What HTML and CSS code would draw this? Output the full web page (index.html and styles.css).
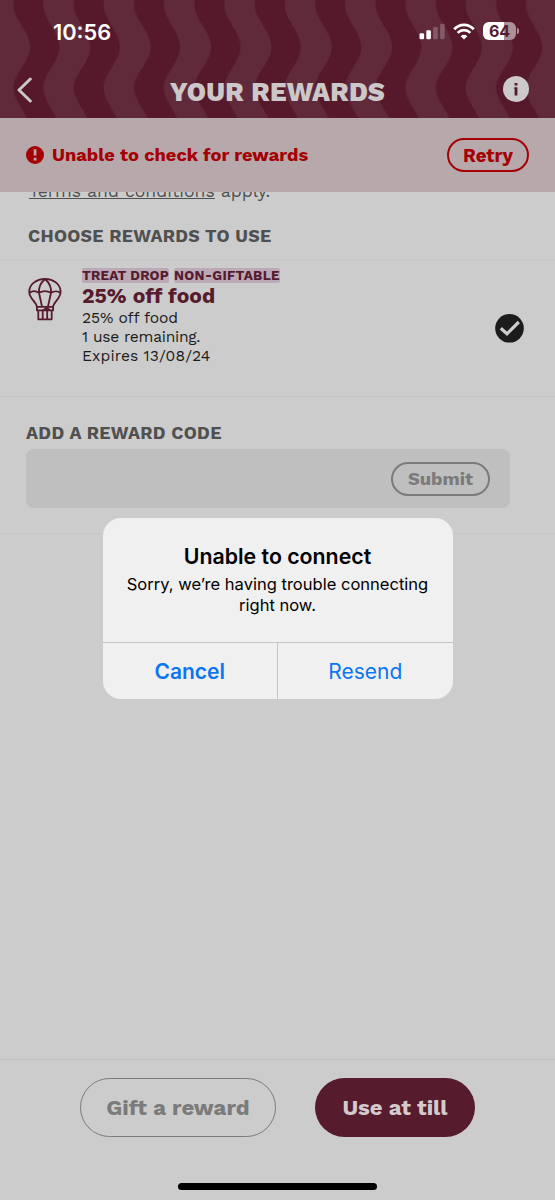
FILE: index.html
```html
<!DOCTYPE html>
<html lang="en">
<head>
<meta charset="utf-8">
<title>Your rewards</title>
<link rel="stylesheet" href="styles.css">
</head>
<body>
<div class="screen">
  <header class="header">
    <svg class="waves" width="555" height="118" viewBox="0 0 555 118" aria-hidden="true">
      <defs>
        <pattern id="wave" x="0" y="0" width="60.35" height="118" patternUnits="userSpaceOnUse">
          <path d="M30 -37C30 -22 13.300 -10 13.300 5C13.300 19 30 32 30 47C30 62 13.300 74 13.300 88C13.300 102 30 115 30 130H59.500C59.500 115 43.300 102 43.300 88C43.300 74 59.500 62 59.500 47C59.500 32 43.300 19 43.300 5C43.300 -10 59.500 -22 59.500 -37Z" fill="#56192b"/>
        </pattern>
      </defs>
      <rect width="555" height="118" fill="#602a3a"/>
      <rect width="555" height="118" fill="url(#wave)"/>
    </svg>
    <div class="status">
      <span class="time">10:56</span>
      <div class="indicators">
        <svg class="signal" width="26" height="17" viewBox="0 0 26 17">
          <rect x="0.500" y="10.200" width="4.600" height="6.100" rx="1.300" fill="#fff"/>
          <rect x="7.300" y="7.300" width="4.600" height="9" rx="1.300" fill="#fff"/>
          <rect x="14.200" y="3.900" width="4.600" height="12.400" rx="1.300" fill="#845a68"/>
          <rect x="21.100" y="0.800" width="4.600" height="15.500" rx="1.300" fill="#845a68"/>
        </svg>
        <svg class="wifi" width="22" height="17" viewBox="0 0 22 17" fill="none" stroke="#fff" stroke-width="2.700">
          <path d="M1.200 6.200C6.800 .3 15.200 .3 20.800 6.200"/>
          <path d="M4.700 9.900C8.300 6.300 13.700 6.300 17.300 9.900"/>
          <path d="M11 16.600L7.700 13.200C9.600 11.400 12.400 11.400 14.300 13.200Z" fill="#fff" stroke="none"/>
        </svg>
        <span class="battery"><b>64</b></span>
        <i class="battery-cap"></i>
      </div>
    </div>
    <div class="nav">
      <svg class="back" width="16" height="26" viewBox="0 0 16 26" fill="none" stroke="#ccc7c8" stroke-width="3" stroke-linecap="round" stroke-linejoin="round"><path d="M14.300 2L3 13L14.300 24"/></svg>
      <h1 class="title">YOUR REWARDS</h1>
      <svg class="info" width="26" height="26" viewBox="0 0 26 26"><circle cx="13" cy="13" r="13" fill="#ccc9ca"/><path d="M11.600 6.900h2.800v2.600h-2.800zM11.200 11.300h3.200v8.300h-2.800v-6.600h-.4z" fill="#541c2e"/></svg>
    </div>
  </header>

  <section class="alert-bar">
    <svg width="18" height="18" viewBox="0 0 18 18"><circle cx="9" cy="9" r="9" fill="#a50004"/><path d="M7.700 3.200h2.800v6.400H7.700zM7.700 11.800h2.800v2.800H7.700z" fill="#b6a8ab"/></svg>
    <span class="alert-text">Unable to check for rewards</span>
    <button class="retry"><span>Retry</span></button>
  </section>

  <main class="content">
    <div class="terms-clip"><p class="terms"><u>Terms and conditions</u> apply.</p></div>
    <h2 class="heading choose">CHOOSE REWARDS TO USE</h2>
    <article class="reward">
      <svg class="balloon" width="34" height="44" viewBox="0 0 34 44" fill="none" stroke="#561b2d" stroke-width="1.800" stroke-linejoin="round">
        <path d="M8.900 29C8.400 23.500 1.200 21 1.200 13.800C1.200 6.500 8.200 1 17 1S32.600 6.500 32.600 13.800C32.600 21 25.600 23.500 25.100 29"/>
        <path d="M1.400 14.800C4 12.800 8 12.800 11 14.800C14.500 12.800 19.500 12.800 23 14.800C26 12.800 30 12.800 32.400 14.800M17 1C12.500 5 10.500 9.500 11 14.800L14 28.500M17 1C21.500 5 23.500 9.500 23 14.800L20 28.500"/>
        <path d="M8.900 28.800H25.100V32.300H8.900ZM10.300 32.300V41.300H23.700V32.300M14.700 33V41M19.200 31V41M14.700 32.300L19 30L22 32"/>
      </svg>
      <div class="reward-copy">
        <div class="tags"><span class="tag tag-a">TREAT DROP</span><span class="tag tag-b">NON-GIFTABLE</span></div>
        <h3 class="reward-title">25% off food</h3>
        <p class="l1">25% off food</p>
        <p class="l2">1 use remaining.</p>
        <p class="l3">Expires 13/08/24</p>
      </div>
      <svg class="check" width="30" height="30" viewBox="0 0 30 30"><circle cx="14.500" cy="15.300" r="14.300" fill="#1c1c1c"/><path d="M5.800 15.300L12 20.800L23.800 9" fill="none" stroke="#ccc" stroke-width="3.200"/></svg>
    </article>
    <section class="code">
      <h2 class="heading add">ADD A REWARD CODE</h2>
      <div class="field"><button class="submit"><span>Submit</span></button></div>
    </section>
  </main>

  <footer class="footer">
    <div class="actions">
      <button class="gift"><span>Gift a reward</span></button>
      <button class="use"><span>Use at till</span></button>
    </div>
    <div class="home"></div>
  </footer>

  <div class="dialog" role="alertdialog">
    <div class="dialog-body">
      <h2 class="dialog-title">Unable to connect</h2>
      <p class="dialog-text"><span class="d1">Sorry, we’re having trouble connecting</span><br><span class="d2">right now.</span></p>
    </div>
    <div class="dialog-actions">
      <button class="cancel"><span>Cancel</span></button>
      <button class="resend"><span>Resend</span></button>
    </div>
  </div>
</div>
</body>
</html>
```
FILE: styles.css
```css
* { box-sizing: border-box; margin: 0; padding: 0; }
body { font-family: "Work Sans", Inter, sans-serif; background: #ccc; }
button { font: inherit; background: none; border: 0; display: flex; align-items: center; justify-content: center; white-space: nowrap; }
svg { display: block; flex: none; }
.screen { position: relative; width: 555px; height: 1200px; overflow: hidden; background: #ccc; display: flex; flex-direction: column; }

.header { position: relative; height: 118px; flex: none; }
.waves { position: absolute; inset: 0; }
.status { position: relative; display: flex; justify-content: space-between; height: 60px; padding: 19px 37px 0 53px; }
.time { font-family: Inter, sans-serif; font-size: 21.800px; line-height: 26px; font-weight: 600; color: #fff; }
.indicators { display: flex; align-items: flex-start; padding-top: 3px; }
.signal { margin-top: 1px; }
.wifi { margin: 1px 8px 0 8px; }
.battery { width: 33px; height: 18px; border-radius: 6px; background: linear-gradient(90deg, #fff 21px, #ad8f99 21px); display: flex; align-items: center; justify-content: center; font-family: Inter, sans-serif; font-size: 16px; line-height: 18px; color: #541c2e; }
.battery b { font-weight: 700; }
.battery-cap { width: 2px; height: 6px; margin: 6px -1px 0 1px; border-radius: 0 2px 2px 0; background: #ad8f99; }
.nav { position: relative; display: flex; align-items: center; height: 60px; padding: 0 26px 0 16px; }
.back { margin-top: -1px; }
.title { flex: 1; text-align: center; padding: 4px 0 0 10px; font-size: 26.300px; line-height: 30px; font-weight: 800; letter-spacing: .3px; margin-left: 10px; color: #ccc7c8; white-space: nowrap; }
.info { margin-top: -2px; }

.alert-bar { height: 74px; flex: none; display: flex; align-items: center; padding: 0 26px; background: #b6a8ab; color: #a50004; font-weight: 700; font-size: 18.300px; }
.alert-text { flex: 1; margin: -1px 0 0 8px; }
.retry { width: 82px; height: 34px; border: 2px solid #a50004; border-radius: 17px; color: #a50004; font-size: 18.600px; padding-top: 1px; }

.content { flex: 1; }
.terms-clip { height: 12px; overflow: hidden; padding-left: 29px; }
.terms { margin-top: -12px; font-size: 17.600px; line-height: 22px; color: #505050; }
.heading { font-size: 17.800px; line-height: 22px; font-weight: 700; letter-spacing: .3px; color: #505050; white-space: nowrap; }
.choose { padding: 21px 0 0 28px; height: 56px; }
.reward { height: 137px; border-top: 1px solid #c7c7c7; border-bottom: 1px solid #c4c4c4; display: flex; padding: 0 31px 0 28px; color: #1c1c1c; }
.balloon { margin-top: 17px; }
.reward-copy { flex: 1; padding: 7px 0 0 20px; }
.tags { display: flex; gap: 5px; height: 15px; }
.tag { height: 15px; line-height: 15px; font-size: 13.500px; font-weight: 700; background: #bca9b7; color: #561b2d; border-radius: 2px; white-space: nowrap; }
.tag-a { letter-spacing: .2px; }
.tag-b { letter-spacing: .32px; }
.reward-title { font-size: 21.100px; line-height: 26px; height: 25px; font-weight: 750; color: #561b2d; }
.reward-copy p { font-size: 15.600px; line-height: 19px; }
.reward-copy .l1 { letter-spacing: -.1px; }
.reward-copy .l2 { letter-spacing: -.26px; }
.reward-copy .l3 { letter-spacing: .12px; }
.check { align-self: flex-start; margin-top: 52px; margin-right: -1px; }
.code { height: 137px; padding: 25px 45px 0 26px; border-bottom: 1px solid #c7c7c7; }
.field { margin-top: 5px; height: 59px; border-radius: 8px; background: #bfbfbf; padding: 0 20px; display: flex; align-items: center; justify-content: flex-end; }
.submit { width: 99px; height: 34px; border: 2px solid #7b7b7b; border-radius: 17px; color: #7b7b7b; font-size: 18.300px; font-weight: 700; }

.footer { height: 141px; border-top: 1px solid #bfbfbf; flex: none; }
.actions { display: flex; gap: 39px; padding: 18px 0 0 80px; }
.actions button { height: 59px; border-radius: 30px; font-size: 22.100px; font-weight: 700; padding-bottom: 1px; }
.actions .gift { width: 196px; border: 1px solid #7b7b7b; color: #7b7b7b; }
.actions .use { width: 160px; background: #561b2d; color: #d4cacd; }
.home { width: 199px; height: 7px; margin: 46px auto 0; border-radius: 4px; background: #000; }

.dialog { position: absolute; left: 102.500px; top: 517.500px; width: 350px; height: 181.500px; border-radius: 18px; background: #f0f0f0; overflow: hidden; display: flex; flex-direction: column; font-family: Inter, sans-serif; }
.dialog-body { height: 125px; text-align: center; padding-top: 25px; border-bottom: 1px solid #c4c4c4; color: #000; }
.dialog-title { font-size: 21.300px; line-height: 26px; font-weight: 600; }
.dialog-text { margin-top: 5px; font-size: 16.550px; line-height: 21px; white-space: nowrap; }
.dialog-actions { flex: 1; display: flex; font-size: 21px; }
.dialog-actions button { flex: 1; color: #0b76f0; padding-top: 2px; }
.dialog-actions .cancel { border-right: 1px solid #c4c4c4; font-weight: 600; }
```
